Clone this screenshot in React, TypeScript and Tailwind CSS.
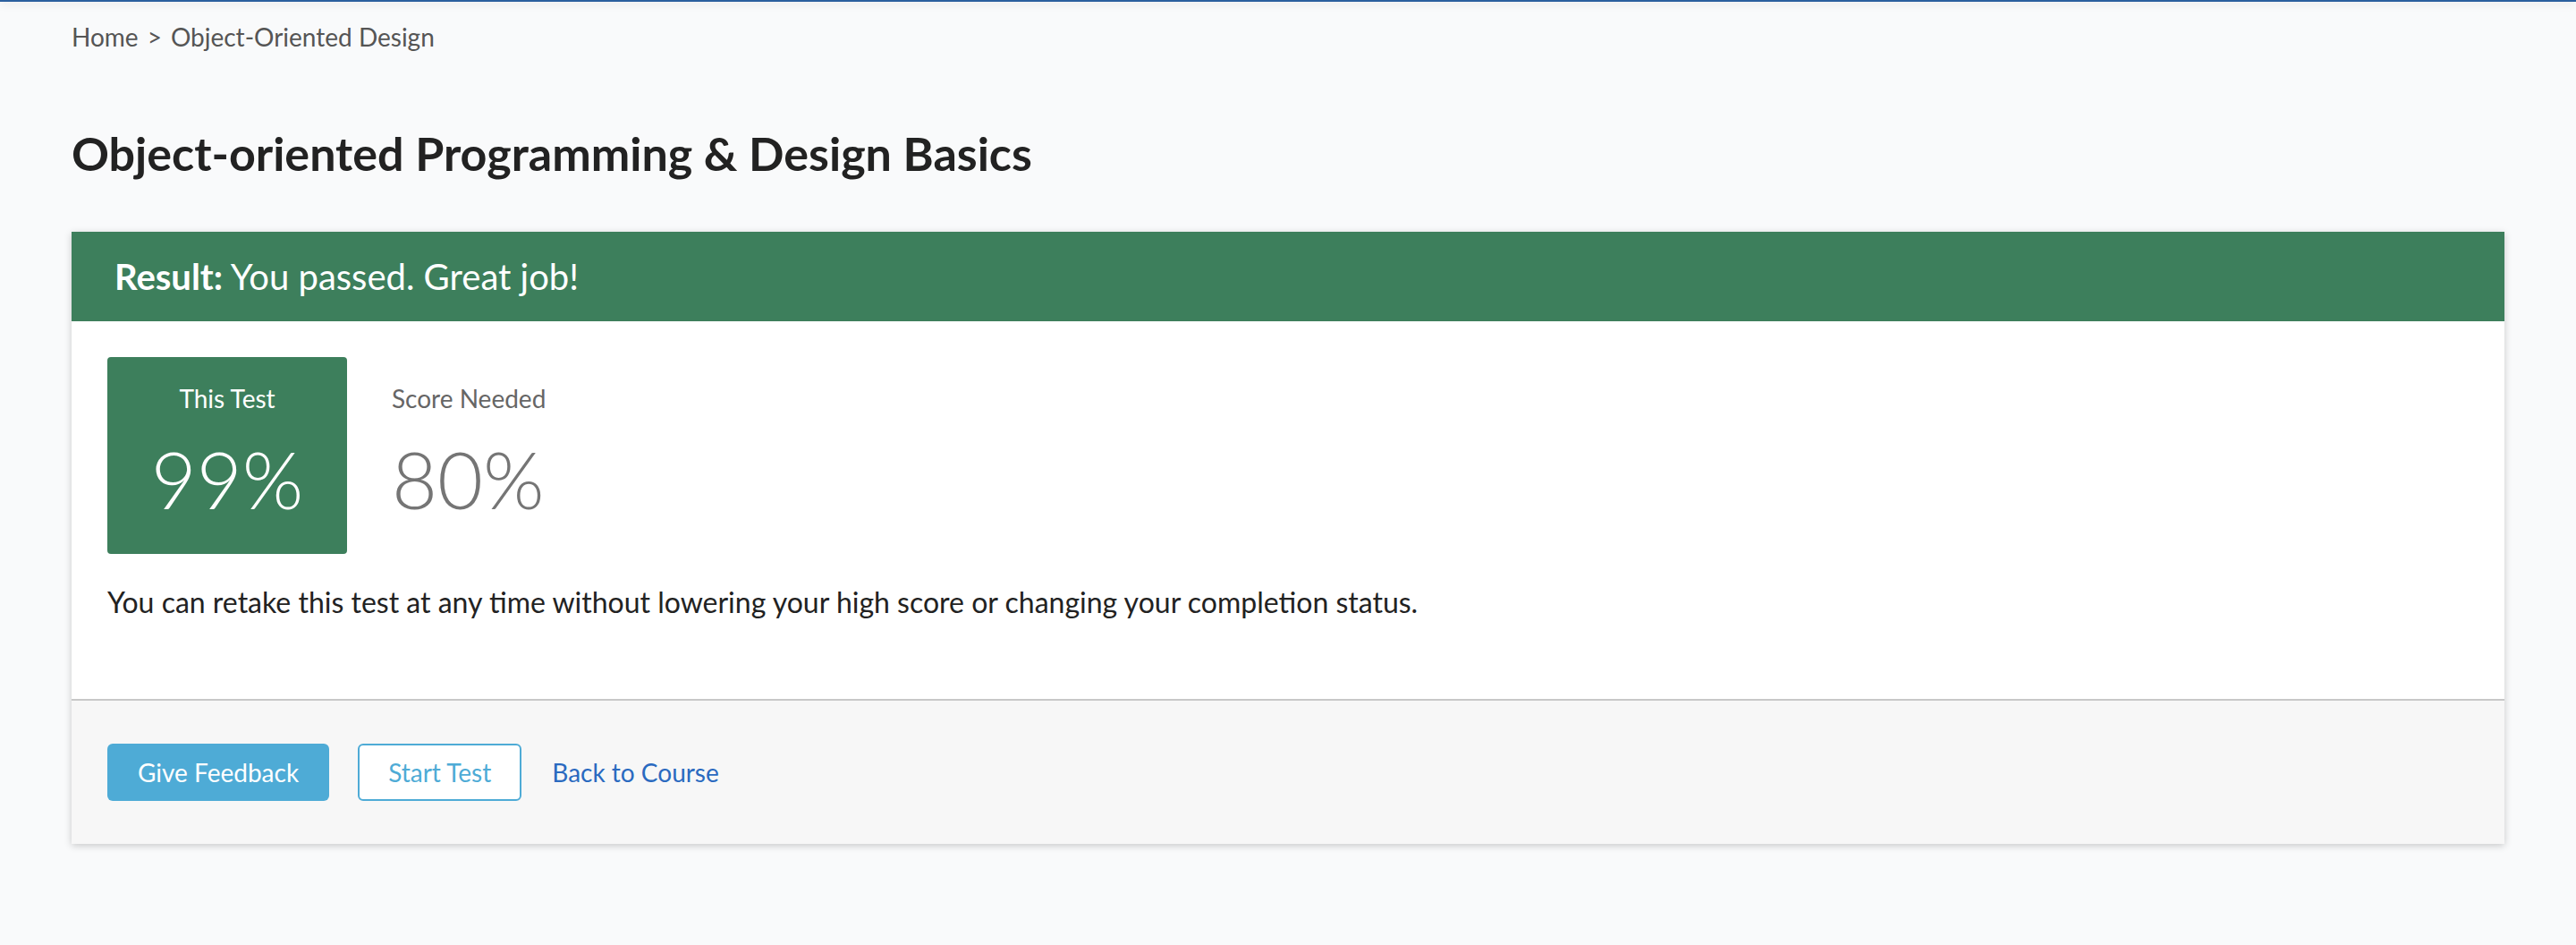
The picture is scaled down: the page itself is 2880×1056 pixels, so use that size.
export default function App() {
  return (
    <div className="min-h-screen bg-[#f9fafb] font-['Lato','Liberation_Sans',sans-serif] text-[#222]">
      <div className="h-[2px] bg-[#2b5f9e] shadow-[0_2px_10px_rgba(0,0,0,0.18)]" />
      <div className="px-[80px]">
        <nav className="pt-[19px] text-[28px] leading-[40px] text-[#555]">
          <span>Home</span>
          <span className="mx-[10px]">&gt;</span>
          <span>Object-Oriented Design</span>
        </nav>

        <h1 className="mt-[78px] text-[52px] font-bold leading-[64px] text-[#222]">
          Object-oriented Programming &amp; Design Basics
        </h1>

        <div className="mt-[56px] bg-white shadow-[0_2px_8px_rgba(0,0,0,0.2)]">
          <div className="flex h-[100px] items-center bg-[#3d7f5c] px-[48px] text-white">
            <p className="text-[40px] leading-[48px]">
              <span className="font-bold">Result:</span> You passed. Great job!
            </p>
          </div>

          <div className="p-[40px]">
            <div className="flex">
              <div className="flex h-[220px] w-[268px] flex-col items-center rounded-[4px] bg-[#3d7f5c] pt-[26px] text-white">
                <div className="text-[28px] leading-[40px]">This Test</div>
                <div className="mt-[26px] text-[88px] font-light leading-[88px]">99%</div>
              </div>
              <div className="ml-[50px] flex flex-col pt-[26px]">
                <div className="text-[28px] leading-[40px] text-[#666]">Score Needed</div>
                <div className="mt-[26px] text-[88px] font-light leading-[88px] text-[#757575]">80%</div>
              </div>
            </div>
            <p className="mb-[44px] mt-[30px] text-[32px] leading-[48px] text-[#222]">
              You can retake this test at any time without lowering your high score or changing your completion status.
            </p>
          </div>

          <div className="flex items-center border-t-2 border-[#c8c8c8] bg-[#f7f7f7] px-[40px] py-[48px]">
            <button className="h-[64px] rounded-[6px] bg-[#4eabd6] px-[34px] text-[28px] text-white">
              Give Feedback
            </button>
            <button className="ml-[32px] h-[64px] rounded-[6px] border-2 border-[#4eabd6] bg-white px-[32px] text-[28px] text-[#4eabd6]">
              Start Test
            </button>
            <a href="#" className="ml-[34px] text-[28px] text-[#2a6ac0]">
              Back to Course
            </a>
          </div>
        </div>
      </div>
    </div>
  );
}
